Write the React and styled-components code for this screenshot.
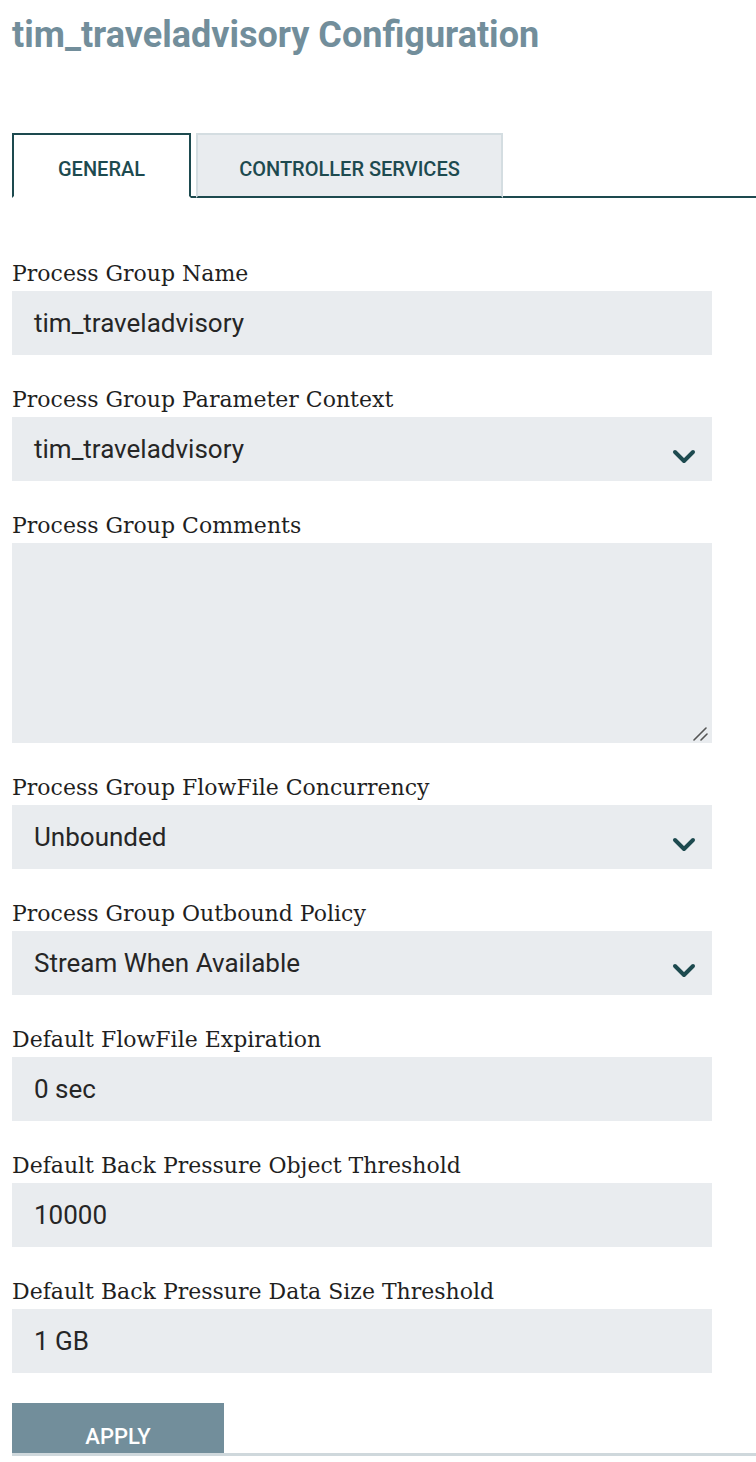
import React from 'react';
import styled, { createGlobalStyle } from 'styled-components';

const GlobalStyle = createGlobalStyle`
  body {
    margin: 0;
    background: #ffffff;
    font-family: Roboto, "Liberation Sans", sans-serif;
  }
`;

const fields = [
  { label: 'Process Group Name', value: 'tim_traveladvisory' },
  { label: 'Process Group Parameter Context', value: 'tim_traveladvisory', select: true },
  { label: 'Process Group Comments', value: '', area: true },
  { label: 'Process Group FlowFile Concurrency', value: 'Unbounded', select: true },
  { label: 'Process Group Outbound Policy', value: 'Stream When Available', select: true },
  { label: 'Default FlowFile Expiration', value: '0 sec' },
  { label: 'Default Back Pressure Object Threshold', value: '10000' },
  { label: 'Default Back Pressure Data Size Threshold', value: '1 GB' },
];

const Chevron = () => (
  <svg width='24' height='16' viewBox='0 0 24 16'>
    <path d='M3 3 L12 12 L21 3' fill='none' stroke='#1d4a4f' strokeWidth='4' strokeLinecap='round' strokeLinejoin='round' />
  </svg>
);

const Grip = () => (
  <svg width='18' height='14' viewBox='0 0 18 14'>
    <path d='M2 13 L14 1 M9 13 L15 7' stroke='#555' strokeWidth='1.6' strokeLinecap='round' />
  </svg>
);

const App = () => {
  return (
    <Page>
      <GlobalStyle />
      <Title>tim_traveladvisory Configuration</Title>
      <TabBar>
        <Tab active>General</Tab>
        <Tab>Controller Services</Tab>
      </TabBar>
      <Form>
        {fields.map((f) => (
          <Field key={f.label}>
            <Label>{f.label}</Label>
            {f.area ? (
              <TextArea>
                <GripWrap>
                  <Grip />
                </GripWrap>
              </TextArea>
            ) : (
              <Input>
                {f.value}
                {f.select && (
                  <Arrow>
                    <Chevron />
                  </Arrow>
                )}
              </Input>
            )}
          </Field>
        ))}
      </Form>
      <Footer>
        <ApplyButton>Apply</ApplyButton>
      </Footer>
    </Page>
  );
};

const Page = styled.div`
  width: 756px;
  height: 1462px;
  overflow: hidden;
`;

const Title = styled.h1`
  margin: 0;
  padding: 12px 12px 0;
  font-size: 36px;
  line-height: 46px;
  font-weight: 700;
  color: #728e9b;
`;

const TabBar = styled.div`
  display: flex;
  gap: 5px;
  margin: 75px 0 0 12px;
  border-bottom: 2px solid #1d4a4f;
`;

const Tab = styled.div`
  box-sizing: border-box;
  height: 65px;
  margin-bottom: -2px;
  display: flex;
  align-items: center;
  justify-content: center;
  text-transform: uppercase;
  font-size: 20px;
  font-weight: 500;
  color: #1d4a4f;
  width: ${(p) => (p.active ? '179px' : '307px')};
  background: ${(p) => (p.active ? '#ffffff' : '#e9ecef')};
  border: 2px solid ${(p) => (p.active ? '#1d4a4f' : '#d4dde1')};
  border-bottom: ${(p) => (p.active ? '2px solid #ffffff' : '2px solid #1d4a4f')};
  padding-top: 6px;
`;

const Form = styled.div`
  display: flex;
  flex-direction: column;
  gap: 32px;
  padding: 63px 12px 0;
`;

const Field = styled.div`
  display: flex;
  flex-direction: column;
  width: 700px;
`;

const Label = styled.div`
  font-family: "DejaVu Serif", serif;
  font-size: 22px;
  line-height: 26px;
  margin-bottom: 4px;
  color: #1f1f1f;
`;

const Input = styled.div`
  position: relative;
  box-sizing: border-box;
  height: 64px;
  padding: 0 22px;
  display: flex;
  align-items: center;
  background: #e9ecef;
  font-size: 26px;
  color: #262626;
`;

const Arrow = styled.span`
  position: absolute;
  right: 16px;
  top: 32px;
  display: flex;
`;

const TextArea = styled.div`
  position: relative;
  height: 200px;
  background: #e9ecef;
`;

const GripWrap = styled.span`
  position: absolute;
  right: 2px;
  bottom: 2px;
  display: flex;
`;

const Footer = styled.div`
  margin: 30px 0 0 12px;
  border-bottom: 3px solid #cfd8dc;
`;

const ApplyButton = styled.div`
  width: 212px;
  height: 50px;
  box-sizing: border-box;
  padding-top: 21px;
  text-align: center;
  background: #728e9b;
  color: #ffffff;
  text-transform: uppercase;
  font-size: 22px;
  font-weight: 500;
  line-height: 26px;
`;

export default App;
